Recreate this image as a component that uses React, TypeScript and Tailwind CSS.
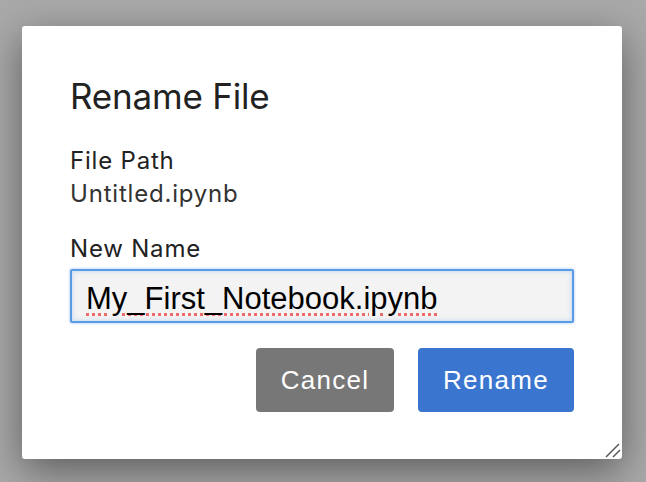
export default function App() {
  return (
    <div className="h-screen w-full overflow-hidden bg-[#a9a9a9] pl-[22px] pt-[26px]">
      <div className="relative h-[433px] w-[600px] rounded-[3px] bg-white px-[48px] pt-[50px] shadow-[0_12px_40px_rgba(0,0,0,0.45)]">
        <h2 className="font-['Inter',sans-serif] text-[35px] leading-[40px] font-normal tracking-[-0.2px] text-[#222]">
          Rename File
        </h2>

        <div className="mt-[28px] font-['Inter',sans-serif] text-[24px] leading-[33px] tracking-[0.8px] text-[#222]">
          <div>File Path</div>
          <div className="text-[#333]">Untitled.ipynb</div>
        </div>

        <label className="mt-[22px] block font-['Inter',sans-serif] text-[24px] leading-[33px] tracking-[0.8px] text-[#222]">
          New Name
        </label>

        <div className="mt-[4px] flex h-[54px] w-[504px] items-center rounded-[2px] border-2 border-[#5a9be8] bg-[#f3f3f3] pt-[4px] pl-[14px] shadow-[inset_0_0_5px_rgba(90,155,232,0.35),0_0_3px_rgba(90,155,232,0.6)]">
          <span className="font-['Liberation_Sans',Arial,sans-serif] text-[31px] leading-none text-black underline decoration-[#ef6b6b] decoration-dotted decoration-[3px] underline-offset-[4px]">
            My_First_Notebook.ipynb
          </span>
        </div>

        <div className="mt-[25px] flex w-[504px] justify-end gap-[24px]">
          <button className="flex h-[64px] w-[138px] items-center justify-center rounded-[4px] bg-[#777777] font-['Liberation_Sans',Arial,sans-serif] text-[26px] tracking-[1.3px] text-white">
            Cancel
          </button>
          <button className="flex h-[64px] w-[156px] items-center justify-center rounded-[4px] bg-[#3a76cf] font-['Liberation_Sans',Arial,sans-serif] text-[26px] tracking-[1.3px] text-white">
            Rename
          </button>
        </div>

        <svg className="absolute right-[1px] bottom-[1px]" width="16" height="16" viewBox="0 0 16 16">
          <line x1="1" y1="15" x2="14" y2="2" stroke="#555" strokeWidth="1.4" />
          <line x1="8" y1="15" x2="15" y2="8" stroke="#555" strokeWidth="1.4" />
        </svg>
      </div>
    </div>
  )
}
